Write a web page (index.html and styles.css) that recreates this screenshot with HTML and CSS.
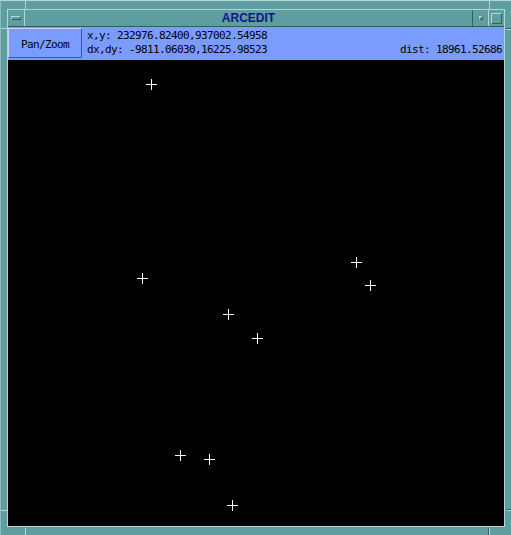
FILE: index.html
```html
<!DOCTYPE html>
<html>
<head>
<meta charset="utf-8">
<link rel="stylesheet" href="styles.css">
</head>
<body>
<div class="window">
  <span class="grip grip-tl"></span>
  <span class="grip grip-tr"></span>
  <span class="grip grip-bl"></span>
  <span class="grip grip-br"></span>
  <span class="grip grip-lt"></span>
  <span class="grip grip-rt"></span>
  <span class="grip grip-lb"></span>
  <span class="grip grip-rb"></span>
  <div class="inner">
    <div class="titlebar">
      <div class="tbtn tbtn-menu"><span class="menu-bar"></span></div>
      <div class="title">ARCEDIT</div>
      <div class="tbtn tbtn-icon"><span class="icon-dot"></span></div>
      <div class="tbtn tbtn-max"><span class="max-box"></span></div>
    </div>
    <div class="toolbar">
      <button class="panzoom">Pan/Zoom</button>
      <div class="readout">
        <div class="row"><span>x,y: 232976.82400,937002.54958</span></div>
        <div class="row"><span>dx,dy: -9811.06030,16225.98523</span><span>dist: 18961.52686</span></div>
      </div>
    </div>
    <div class="canvas">
      <svg class="marks" width="496" height="466" viewBox="0 0 496 466">
        <g stroke="#ffffff" stroke-width="1" shape-rendering="crispEdges" fill="none">
          <path d="M137.5 24.5h11M143.5 18.5v11"/>
          <path d="M128.5 218.5h11M134.5 212.5v11"/>
          <path d="M342.5 202.5h11M348.5 196.5v11"/>
          <path d="M356.5 225.5h11M362.5 219.5v11"/>
          <path d="M214.5 254.5h11M220.5 248.5v11"/>
          <path d="M243.5 278.5h11M249.5 272.5v11"/>
          <path d="M166.5 395.5h11M172.5 389.5v11"/>
          <path d="M195.5 399.5h11M201.5 393.5v11"/>
          <path d="M218.5 445.5h11M224.5 439.5v11"/>
        </g>
      </svg>
    </div>
  </div>
</div>
</body>
</html>
```
FILE: styles.css
```css
html, body {
  margin: 0;
  padding: 0;
  background: #5f9ea0;
}

.window {
  position: relative;
  width: 511px;
  height: 535px;
  box-sizing: border-box;
  background: #5f9ea0;
  border-top: 1px solid #b4d6d6;
  border-left: 1px solid #8cbcbd;
  padding: 8px 6px 8px 6px;
}

.grip {
  position: absolute;
  background: #b4d6d6;
}
.grip-tl { left: 24px; top: 0; width: 1px; height: 9px; }
.grip-tr { left: 488px; top: 0; width: 1px; height: 9px; }
.grip-bl { left: 24px; top: 527px; width: 1px; height: 8px; }
.grip-br { left: 488px; top: 527px; width: 1px; height: 8px; background: #b4d6d6; box-shadow: -1px 0 0 #2f5f60; }
.grip-lt { left: 0; top: 27px; width: 7px; height: 1px; }
.grip-rt { left: 505px; top: 28px; width: 6px; height: 1px; box-shadow: 0 -1px 0 #2f5f60; }
.grip-lb { left: 0; top: 509px; width: 7px; height: 1px; }
.grip-rb { left: 505px; top: 509px; width: 6px; height: 1px; box-shadow: 0 -1px 0 #2f5f60; }

.inner {
  width: 498px;
  height: 518px;
  box-sizing: border-box;
  border: 1px solid #b4d6d6;
  display: flex;
  flex-direction: column;
}

.titlebar {
  height: 16px;
  border-bottom: 1px solid #2f5f60;
  display: flex;
  align-items: stretch;
  flex: none;
}

.tbtn {
  flex: none;
  display: flex;
  align-items: center;
  justify-content: center;
  box-sizing: border-box;
}
.tbtn-menu {
  width: 17px;
  border-right: 1px solid #b4d6d6;
}
.menu-bar {
  width: 8px;
  height: 2px;
  border: 1px solid #2f5f60;
  border-top-color: #b4d6d6;
  border-left-color: #b4d6d6;
}
.tbtn-icon {
  width: 17px;
  border-left: 1px solid #2f5f60;
  border-right: 1px solid #b4d6d6;
}
.icon-dot {
  width: 2px;
  height: 2px;
  border: 1px solid #2f5f60;
  border-top-color: #b4d6d6;
  border-left-color: #b4d6d6;
}
.tbtn-max {
  width: 15px;
}
.max-box {
  width: 11px;
  height: 11px;
  box-sizing: border-box;
  border: 1px solid #2f5f60;
  border-top-color: #b4d6d6;
  border-left-color: #b4d6d6;
}

.title {
  flex: 1;
  text-align: center;
  font-family: "Liberation Sans", Arial, sans-serif;
  font-weight: bold;
  font-size: 12px;
  line-height: 17px;
  color: #14148a;
}

.toolbar {
  flex: none;
  height: 33px;
  background: #7b9cff;
  display: flex;
  align-items: flex-start;
  font-family: "DejaVu Sans Mono", "Liberation Mono", monospace;
  font-size: 11px;
  letter-spacing: -0.62px;
  color: #000;
}

.panzoom {
  margin: 1px 0 0 0;
  width: 74px;
  height: 30px;
  box-sizing: border-box;
  background: #7b9cff;
  border: 1px solid;
  border-color: #c4d4ff #3a58b0 #3a58b0 #c4d4ff;
  font: inherit;
  letter-spacing: -0.62px;
  color: #000;
  padding: 2px 0 0 0;
  border-radius: 0;
}

.readout {
  flex: 1;
  padding: 2px 2px 0 5px;
  display: flex;
  flex-direction: column;
}
.row {
  height: 14px;
  line-height: 14px;
  display: flex;
  justify-content: space-between;
  white-space: pre;
}

.canvas {
  position: relative;
  flex: 1;
  background: #000;
}
.marks {
  position: absolute;
  left: 0;
  top: 0;
  display: block;
}
```
